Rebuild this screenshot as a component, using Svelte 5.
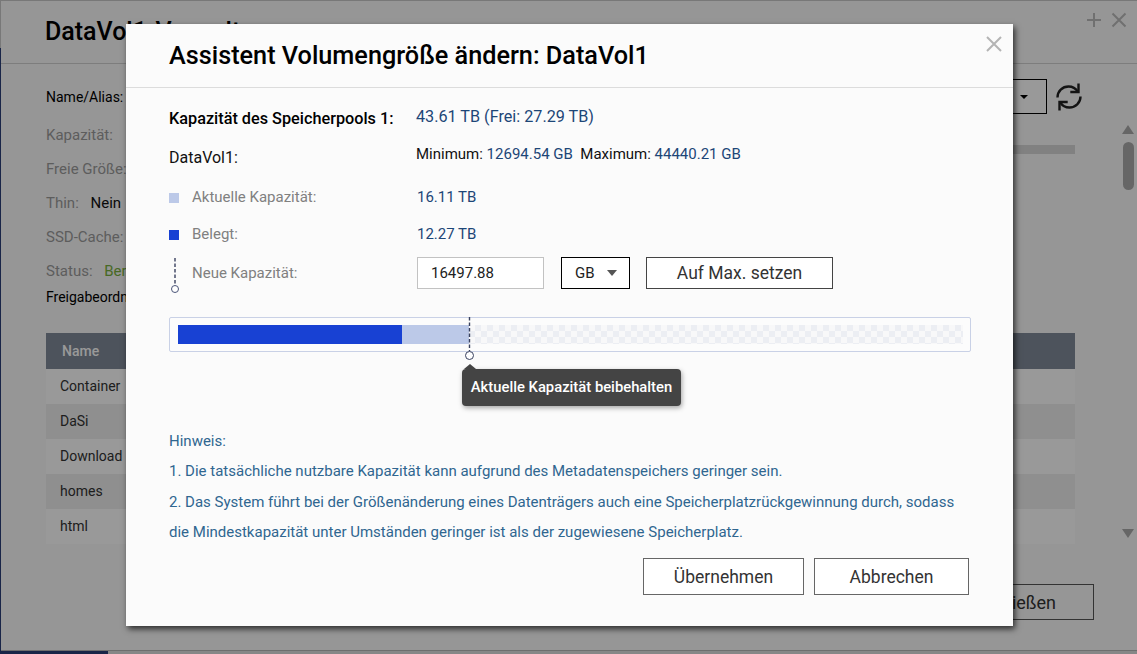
<script>
  const rows = ['Container', 'DaSi', 'Download', 'homes', 'html'];
</script>

<div class="desktop">
  <div class="taskbar"></div>
  <main class="window">
    <header class="win-head">
      <h2>DataVol1-Verwaltung</h2>
      <div class="win-tools">
        <svg width="18" height="18" viewBox="0 0 18 18"><path d="M9 2v14M2 9h14" /></svg>
        <svg width="18" height="18" viewBox="0 0 18 18"><path d="M2.500 2.500l13 13M15.500 2.500l-13 13" /></svg>
      </div>
    </header>
    <section class="win-body">
      <div class="info-top">
        <div class="info">
          <p class="strong">Name/Alias:</p>
          <p>Kapazität:</p>
          <p>Freie Größe:</p>
          <p>Thin: <span class="dark">Nein</span></p>
          <p>SSD-Cache:</p>
          <p>Status: <span class="green">Bereit</span></p>
          <p class="strong last">Freigabeordner</p>
        </div>
        <div class="info-right">
          <div class="tools">
            <div class="mini-select"><i></i></div>
            <svg class="refresh" width="30" height="30" viewBox="0 0 30 30">
              <path d="M3.500 15.500C3.500 9 8.500 4.500 14.500 4.500c4 0 7.200 1.800 9.200 5.200" />
              <path d="M26.500 14.500c0 6.500-5 11-11 11-4 0-7.200-1.800-9.200-5.200" />
              <path d="M24.500 1.500v8.500h-8.200M5.500 28.500V20h8.200" />
            </svg>
          </div>
          <div class="usage"></div>
        </div>
      </div>
      <div class="table">
        <div class="thead">Name</div>
        {#each rows as r}
          <div class="tr">{r}</div>
        {/each}
      </div>
      <div class="win-foot"><button class="close-bg">Schließen</button></div>
    </section>
    <aside class="scroll">
      <i class="up"></i>
      <i class="thumb"></i>
      <i class="down"></i>
    </aside>
  </main>

  <div class="shade"></div>

  <div class="modal">
    <header class="m-head">
      <h1>Assistent Volumengröße ändern: DataVol1</h1>
      <svg class="m-close" width="16" height="16" viewBox="0 0 16 16"><path d="M1 1l14 14M15 1L1 15" /></svg>
    </header>
    <div class="m-body">
      <div class="line pool">
        <span class="label-strong">Kapazität des Speicherpools 1:</span>
        <span class="pool-val">43.61 TB (Frei: 27.29 TB)</span>
      </div>
      <div class="line vol">
        <span class="label-vol">DataVol1:</span>
        <span class="minmax">Minimum: <b>12694.54 GB</b>&nbsp; Maximum: <b>44440.21 GB</b></span>
      </div>
      <div class="line legend cap">
        <span class="lab"><i class="sw light"></i>Aktuelle Kapazität:</span>
        <span class="val">16.11 TB</span>
      </div>
      <div class="line legend used">
        <span class="lab"><i class="sw blue"></i>Belegt:</span>
        <span class="val">12.27 TB</span>
      </div>
      <div class="line legend new">
        <span class="lab">
          <svg class="pin" width="10" height="36" viewBox="0 0 10 36">
            <path class="dash" d="M5 0v27" />
            <circle cx="5" cy="31" r="3.500" />
          </svg>
          Neue Kapazität:
        </span>
        <div class="controls">
          <div class="input">16497.88</div>
          <div class="select">GB<i></i></div>
          <button class="max">Auf Max. setzen</button>
        </div>
      </div>

      <div class="bar-wrap">
        <div class="bar">
          <div class="seg s-used"></div>
          <div class="seg s-cap"></div>
          <div class="seg s-free"></div>
        </div>
        <svg class="marker" width="10" height="44" viewBox="0 0 10 44">
          <path class="dash" d="M4.500 0v34" />
          <circle cx="4.500" cy="38.500" r="4" />
        </svg>
        <div class="tip">Aktuelle Kapazität beibehalten</div>
      </div>

      <div class="notes">
        <p>Hinweis:</p>
        <p>1. Die tatsächliche nutzbare Kapazität kann aufgrund des Metadatenspeichers geringer sein.</p>
        <p>2. Das System führt bei der Größenänderung eines Datenträgers auch eine Speicherplatzrückgewinnung durch, sodass</p>
        <p>die Mindestkapazität unter Umständen geringer ist als der zugewiesene Speicherplatz.</p>
      </div>

      <div class="actions">
        <button class="apply">Übernehmen</button>
        <button class="cancel">Abbrechen</button>
      </div>
    </div>
  </div>
</div>

<style>
  :global(body) {
    margin: 0;
    overflow: hidden;
    font-family: Roboto, "Liberation Sans", sans-serif;
  }
  p, h1, h2 { margin: 0; }
  button { font-family: inherit; }

  .desktop {
    position: relative;
    width: 1137px;
    height: 654px;
    overflow: hidden;
    background: linear-gradient(#c8c8c8 0 48px, #2a3f78 48px);
    padding: 1px 0 3px 1px;
    box-sizing: border-box;
  }
  .taskbar {
    position: absolute;
    left: 108px;
    right: 0;
    bottom: 0;
    height: 3px;
    background: #e2e2e2;
  }
  .window {
    position: relative;
    height: 100%;
    background: #fafafa;
    color: #000;
    display: flex;
    flex-direction: column;
    border-bottom: 1px solid #b8b8b8;
    box-sizing: border-box;
  }
  .win-head {
    height: 62px;
    flex: none;
    border-bottom: 1px solid #d0d0d0;
    display: flex;
    align-items: flex-start;
    padding-left: 44px;
  }
  .win-head h2 {
    font-size: 25px;
    font-weight: 500;
    line-height: 28px;
    margin-top: 17px;
  }
  .win-tools {
    margin-left: auto;
    display: flex;
    gap: 7px;
    margin-top: 10px;
    margin-right: 9px;
  }
  .win-tools path { stroke: #bbb; stroke-width: 2; fill: none; }
  .win-body {
    flex: 1;
    display: flex;
    flex-direction: column;
    padding: 0 62px 0 45px;
    min-height: 0;
  }
  .info-top { display: flex; height: 269px; }
  .info { width: 300px; padding-top: 23px; }
  .info p {
    font-size: 15px;
    line-height: 20px;
    margin-bottom: 14px;
    color: #9c9c9c;
    white-space: nowrap;
  }
  .info p.strong { color: #000; font-size: 14px; margin-bottom: 18px; }
  .info p.last { margin-top: -8px; }
  .dark { color: #111; margin-left: 8px; }
  .green { color: #78b040; margin-left: 8px; }
  .info-right { flex: 1; display: flex; flex-direction: column; align-items: flex-end; }
  .tools { display: flex; align-items: center; gap: 7px; margin-top: 15px; margin-right: -9px; }
  .mini-select {
    width: 119px;
    height: 33px;
    border: 1px solid #000;
    position: relative;
    background: #fff;
  }
  .mini-select i {
    position: absolute;
    right: 18px;
    top: 15px;
    border: 4px solid transparent;
    border-top: 4px solid #000;
    border-bottom: 0;
  }
  .refresh path { stroke: #222; stroke-width: 2.400; fill: none; }
  .usage {
    margin-top: 31px;
    width: 300px;
    height: 9px;
    background: #d8d8d8;
  }
  .table { font-size: 14px; color: #333; }
  .thead {
    height: 36px;
    line-height: 36px;
    background: #808a99;
    color: #fff;
    padding-left: 16px;
    font-weight: 500;
  }
  .tr {
    height: 35px;
    line-height: 34px;
    padding-left: 14px;
    background: #fff;
  }
  .tr:nth-child(odd) { background: #eeeeee; }
  .win-foot { display: flex; justify-content: flex-end; margin-top: 40px; margin-right: -19px; }
  .close-bg {
    width: 200px;
    height: 36px;
    background: #fafafa;
    border: 1px solid #555;
    font-size: 18px;
    color: #333;
    text-align: right;
    padding-right: 37px;
  }
  .scroll {
    position: absolute;
    right: 2px;
    top: 124px;
    width: 13px;
    height: 413px;
  }
  .scroll .up, .scroll .down {
    position: absolute;
    left: 0;
    border: 6.500px solid transparent;
  }
  .scroll .up { top: 0; border-top: 0; border-bottom: 9px solid #aaa; }
  .scroll .down { bottom: 0; border-bottom: 0; border-top: 9px solid #aaa; }
  .scroll .thumb {
    position: absolute;
    left: 1px;
    top: 17px;
    width: 11px;
    height: 48px;
    border-radius: 6px;
    background: #aaa;
  }

  .shade {
    position: absolute;
    inset: 0;
    background: rgba(0, 0, 0, 0.40);
  }

  .modal {
    position: absolute;
    left: 126px;
    top: 24px;
    width: 887px;
    height: 602px;
    background: #fbfbfb;
    box-shadow: 2px 3px 6px rgba(0, 0, 0, 0.7);
    color: #000;
  }
  .m-head {
    height: 63px;
    border-bottom: 1px solid #dcdcdc;
    padding-left: 43px;
    display: flex;
    align-items: flex-start;
  }
  .m-head h1 {
    font-size: 25.250px;
    line-height: 30px;
    font-weight: 500;
    margin-top: 17px;
  }
  .m-close {
    margin-left: auto;
    margin-top: 12px;
    margin-right: 11px;
  }
  .m-close path { stroke: #b4b4b4; stroke-width: 2; fill: none; }

  .m-body { padding: 0 44px 0 43px; }
  .line {
    display: flex;
    align-items: flex-start;
  }
  .line > :first-child { width: 247px; flex: none; }
  .pool { margin-top: 21px; height: 20px; line-height: 20px; }
  .label-strong { font-size: 16.250px; font-weight: 500; white-space: nowrap; }
  .pool-val { font-size: 16.200px; color: #1d4677; margin-top: -2px; }
  .vol { margin-top: 19px; height: 20px; line-height: 20px; }
  .label-vol { font-size: 16px; color: #111; }
  .minmax { font-size: 15px; color: #111; margin-top: -4px; }
  .minmax b { font-weight: 400; color: #1d4677; }
  .legend { font-size: 15px; line-height: 20px; height: 20px; }
  .cap { margin-top: 19px; }
  .used { margin-top: 17px; }
  .new { margin-top: 19px; align-items: center; }
  .lab {
    color: #808080;
    display: flex;
    align-items: center;
    position: relative;
    padding-left: 23px;
    box-sizing: border-box;
    width: 248px !important;
  }
  .val { color: #1d4677; }
  .sw {
    position: absolute;
    left: 0;
    top: 6px;
    width: 10px;
    height: 10px;
  }
  .sw.light { background: #bcc9e8; }
  .sw.blue { background: #1841d3; }
  .pin { position: absolute; left: 1px; top: -5px; overflow: visible; }
  .pin .dash, .marker .dash { stroke: #39415f; stroke-width: 1.400; stroke-dasharray: 3.500 2; fill: none; }
  .pin circle { stroke: #4a5478; stroke-width: 1; fill: #fff; }
  .controls { display: flex; align-items: center; gap: 17px; }
  .input {
    width: 127px;
    height: 32px;
    line-height: 30px;
    box-sizing: border-box;
    border: 1px solid #c2c2c2;
    background: #fff;
    padding-left: 13px;
    font-size: 15px;
    color: #222;
  }
  .select {
    width: 69px;
    height: 32px;
    line-height: 30px;
    box-sizing: border-box;
    border: 1px solid #000;
    background: #fff;
    padding-left: 13px;
    font-size: 15px;
    color: #222;
    position: relative;
  }
  .select i {
    position: absolute;
    right: 12px;
    top: 12px;
    border: 5px solid transparent;
    border-top: 6px solid #555;
    border-bottom: 0;
  }
  .max {
    width: 187px;
    height: 32px;
    margin-left: -1px;
    box-sizing: border-box;
    border: 1px solid #444;
    background: #fff;
    font-size: 17.500px;
    color: #333;
    padding: 0;
  }
  .bar-wrap {
    position: relative;
    margin-top: 34px;
    height: 35px;
    margin-right: -2px;
  }
  .bar {
    box-sizing: border-box;
    height: 35px;
    border: 1px solid #c9d1e6;
    border-radius: 2px;
    padding: 7px 7px 7px 8px;
    display: flex;
    background: #fcfcfc;
  }
  .seg { height: 19px; }
  .s-used { width: 224px; background: #1841d3; }
  .s-cap { width: 67px; background: #bcc9e8; }
  .s-free {
    flex: 1;
    background: repeating-conic-gradient(#eceef3 0 25%, #f8f8f9 0 50%) 0 0 / 12px 12px;
  }
  .marker {
    position: absolute;
    left: 296px;
    top: 0;
  }
  .marker circle { stroke: #39415f; stroke-width: 1; fill: #fff; }
  .tip {
    position: absolute;
    left: 293px;
    top: 52px;
    width: 219px;
    height: 37px;
    line-height: 36px;
    text-align: center;
    background: #444;
    color: #fff;
    font-size: 14.800px;
    font-weight: 500;
    border-radius: 4px;
    box-shadow: 1px 2px 5px rgba(0, 0, 0, 0.35);
  }
  .tip::before {
    content: '';
    position: absolute;
    left: 2px;
    top: -5px;
    border: 6px solid transparent;
    border-top: 0;
    border-bottom: 5px solid #444;
  }
  .notes {
    margin-top: 74px;
    color: #2f6690;
    font-size: 15px;
    line-height: 30.300px;
    white-space: nowrap;
  }
  .actions {
    display: flex;
    justify-content: flex-end;
    gap: 10px;
    margin-top: 11px;
    margin-right: 0;
  }
  .actions button {
    height: 37px;
    box-sizing: border-box;
    background: #fff;
    border: 1px solid #666;
    font-size: 17.500px;
    color: #333;
    padding: 0;
  }
  .apply { width: 161px; }
  .cancel { width: 155px; }
</style>
